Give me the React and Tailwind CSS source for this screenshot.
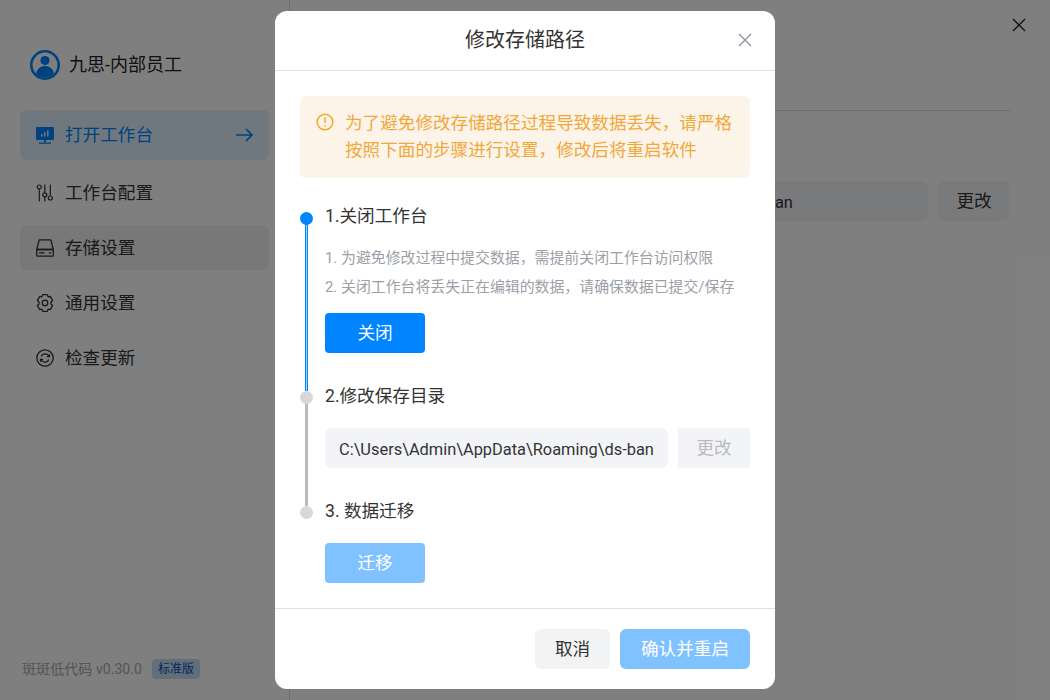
import React from "react";

function UserIcon() {
  return (
    <svg width="30" height="30" viewBox="0 0 30 30" className="shrink-0">
      <circle cx="15" cy="15" r="13.7" fill="none" stroke="#0084ff" strokeWidth="2.6" />
      <circle cx="15" cy="10.5" r="4.6" fill="#0084ff" />
      <path d="M6 23.5c1-5 4.5-7.500 9-7.500s8 2.500 9 7.500c-2.400 2.600-5.500 4-9 4s-6.600-1.400-9-4z" fill="#0084ff" />
    </svg>
  );
}

function MonitorIcon() {
  return (
    <svg width="18" height="18" viewBox="0 0 18 18" className="shrink-0">
      <rect x="0" y="1" width="18" height="13" rx="1" fill="#0084ff" />
      <rect x="8" y="14" width="2" height="2.500" fill="#0084ff" />
      <rect x="3" y="16.500" width="12" height="1.300" fill="#0084ff" />
      <path d="M5 8h1.500v2.500H5zM8 6h1.500v4.500H8zM11 4.500h1.500v6H11z" fill="#def0ff" />
    </svg>
  );
}

function SlidersIcon() {
  return (
    <svg width="18" height="18" viewBox="0 0 18 18" fill="none" stroke="#333" strokeWidth="1.200" className="shrink-0">
      <circle cx="3.300" cy="3" r="2" />
      <path d="M3.300 5v12.500M8.800 .5v8M8.800 13v4.500M14.300 .5v11" />
      <circle cx="8.800" cy="10.800" r="2" />
      <circle cx="14.300" cy="14" r="2" />
    </svg>
  );
}

function DiskIcon() {
  return (
    <svg width="18" height="18" viewBox="0 0 18 18" fill="none" stroke="#333" strokeWidth="1.300" className="shrink-0">
      <path d="M3.200 .8h11.600l2.500 9.700H.7z" strokeLinejoin="round" />
      <rect x=".7" y="10.500" width="16.600" height="6.700" rx="1" />
      <path d="M12.800 13.800h2.400M3 13.800h5.500" />
    </svg>
  );
}

function GearIcon() {
  return (
    <svg width="18" height="18" viewBox="1 .6 16 16.800" fill="none" stroke="#333" strokeWidth="1.200" className="shrink-0">
      <path d="M6.800 1.200h4.400l.7 2.100 2-.5 2.200 3.800-1.500 1.500 0 1.800 1.500 1.500-2.200 3.800-2-.5-.7 2.100H6.800l-.7-2.100-2 .5-2.200-3.800 1.500-1.500 0-1.800-1.500-1.500 2.200-3.800 2 .5z" strokeLinejoin="round" />
      <circle cx="9" cy="9" r="2.600" />
    </svg>
  );
}

function UpdateIcon() {
  return (
    <svg width="18" height="18" viewBox="0 0 18 18" fill="none" stroke="#333" strokeWidth="1.300" className="shrink-0">
      <circle cx="9" cy="9" r="8.200" />
      <path d="M13 7.200A4.300 4.300 0 0 0 5.200 7.500M5 10.800a4.300 4.300 0 0 0 7.800-.3" />
      <path d="M13.500 5.200v2.500H11M4.500 12.800v-2.500H7" />
    </svg>
  );
}

function CloseIcon({ size, color, width }) {
  return (
    <svg width={size} height={size} viewBox="0 0 14 14" fill="none" stroke={color} strokeWidth={width}>
      <path d="M1 1l12 12M13 1L1 13" />
    </svg>
  );
}

function WarnIcon() {
  return (
    <svg width="18" height="18" viewBox="0 0 18 18" fill="none" stroke="#f5a623" strokeWidth="1.500" className="shrink-0">
      <circle cx="9" cy="9" r="7.800" />
      <path d="M9 4.500v5.500M9 12v1.500" />
    </svg>
  );
}

function NavItem({ icon, label, active, selected }) {
  const bg = active ? "h-[50px] bg-[#def0ff] text-[#0084ff]" : selected ? "h-[45px] bg-[#f0f0f0] text-[#333]" : "h-[45px] text-[#333]";
  return (
    <div className={`flex items-center gap-[11px] rounded-md pl-4 pr-4 text-[17.6px] ${bg}`}>
      {icon}
      <span className={active ? "flex-1" : "flex-1 pt-[2px]"}>{label}</span>
      {active && (
        <svg width="17" height="14" viewBox="0 0 17 14" fill="none" stroke="#0084ff" strokeWidth="1.600">
          <path d="M0 7h16M10 1l6 6-6 6" />
        </svg>
      )}
    </div>
  );
}

function Step({ active, line, dotTop, titleLeading, title, children, className }) {
  return (
    <div className={`flex gap-[12px] ${className}`}>
      <div className={`flex w-[13px] shrink-0 flex-col items-center ${dotTop}`}>
        <span className={`z-10 h-[13px] w-[13px] shrink-0 rounded-full ${active ? "bg-[#0084ff]" : "bg-[#d8d8d8]"}`}></span>
        {line && <span className={`-mb-[14px] -mt-px w-[3px] flex-1 ${line}`}></span>}
      </div>
      <div className="flex-1">
        <div className={`h-[40px] text-[17.6px] text-[#333] ${titleLeading}`}>{title}</div>
        {children}
      </div>
    </div>
  );
}

export default function App() {
  return (
    <div className="relative flex h-[700px] w-[1050px] overflow-hidden bg-white" style={{ fontFamily: 'Roboto, "Noto Sans CJK SC", sans-serif' }}>
      {/* 底层页面 */}
      <aside className="flex w-[290px] shrink-0 flex-col border-r border-[#ddd] pb-[20px] pl-[20px] pr-[20px]">
        <div className="flex h-[110px] items-start gap-[9px] pl-[10px] pt-[50px] text-[18px] leading-[30px] text-[#222]">
          <UserIcon />
          <span>九思-内部员工</span>
        </div>
        <div className="flex flex-col gap-[10px]">
          <NavItem icon={<MonitorIcon />} label="打开工作台" active />
          <NavItem icon={<SlidersIcon />} label="工作台配置" />
          <NavItem icon={<DiskIcon />} label="存储设置" selected />
          <NavItem icon={<GearIcon />} label="通用设置" />
          <NavItem icon={<UpdateIcon />} label="检查更新" />
        </div>
        <div className="mt-auto flex items-center gap-[10px] pl-[2px] text-[14.1px] text-[#aaa]">
          <span>斑斑低代码 v0.30.0</span>
          <span className="rounded bg-[#c4dff5] px-[6px] text-[12px] leading-[20px] text-[#0052b0]">标准版</span>
        </div>
      </aside>
      <main className="flex-1 pr-[40px] pt-[110px]">
        <div className="h-[71px] border-t border-[#ddd]"></div>
        <div className="flex justify-end gap-[10px]">
          <div className="h-[40px] w-[464px] rounded-md bg-[#f3f4f7] pl-[14px] text-[16.4px] leading-[43px] text-[#333]">C:\Users\Admin\AppData\Roaming\ds-ban</div>
          <div className="h-[40px] w-[72px] rounded-md bg-[#f3f4f7] text-center text-[17.6px] leading-[40px] text-[#333]">更改</div>
        </div>
      </main>
      <div className="absolute right-[24px] top-[18px]">
        <CloseIcon size={14} color="#222" width={1.300} />
      </div>

      {/* 遮罩 + 弹窗 */}
      <div className="absolute inset-0 flex items-start justify-center bg-black/50 pt-[11px]">
        <div className="flex h-[678px] w-[500px] flex-col rounded-xl bg-white">
          <header className="relative flex h-[60px] shrink-0 items-center justify-center border-b border-[#dfe1ea] pb-[2px] text-[20px] text-[#333]">
            修改存储路径
            <span className="absolute right-[23px] top-[22px]">
              <CloseIcon size={14} color="#8a8f99" width={1.200} />
            </span>
          </header>
          <div className="flex-1 px-[25px] pt-[25px]">
            <div className="flex h-[82px] gap-[11px] rounded-md bg-[#fdf4e9] pl-[16px] pr-[14px] pt-[14px] text-[17.6px] leading-[27px] text-[#f0a83c]">
              <span className="pt-[3px]"><WarnIcon /></span>
              <span>为了避免修改存储路径过程导致数据丢失，请严格按照下面的步骤进行设置，修改后将重启软件</span>
            </div>
            <Step className="mt-[18px] h-[181px]" active dotTop="pt-[16px]" titleLeading="leading-[40px]" line="border-x border-[#0084ff] bg-[#a6d4ff]" title="1.关闭工作台">
              <div className="pt-[8px] text-[14.9px] leading-[28.500px] text-[#9a9fa8]">
                <p>1. 为避免修改过程中提交数据，需提前关闭工作台访问权限</p>
                <p className="whitespace-nowrap">2. 关闭工作台将丢失正在编辑的数据，请确保数据已提交/保存</p>
              </div>
              <div className="mt-[12px] h-[40px] w-[100px] rounded bg-[#0084ff] text-center text-[17.6px] leading-[40px] text-white">关闭</div>
            </Step>
            <Step className="h-[115px]" dotTop="pt-[14px]" titleLeading="leading-[38px]" line="bg-[#bbb]" title="2.修改保存目录">
              <div className="mt-[11px] flex gap-[10px]">
                <div className="h-[40px] flex-1 rounded-md bg-[#f3f4f7] pl-[14px] text-[16.4px] leading-[43px] text-[#333]">C:\Users\Admin\AppData\Roaming\ds-ban</div>
                <div className="h-[40px] w-[72px] bg-[#f3f4f7] text-center text-[17.6px] leading-[40px] text-[#bbb]">更改</div>
              </div>
            </Step>
            <Step dotTop="pt-[14px]" titleLeading="leading-[38px]" title="3. 数据迁移">
              <div className="mt-[11px] h-[40px] w-[100px] rounded bg-[#80c2ff] text-center text-[17.6px] leading-[41px] text-white">迁移</div>
            </Step>
          </div>
          <footer className="flex h-[81px] shrink-0 items-start justify-end gap-[10px] border-t border-[#dfe1ea] pr-[25px] pt-[20px]">
            <div className="h-[40px] w-[75px] rounded-md bg-[#f2f3f5] text-center text-[17.6px] leading-[41px] text-[#333]">取消</div>
            <div className="h-[40px] w-[130px] rounded-md bg-[#80c2ff] text-center text-[17.6px] leading-[41px] text-white">确认并重启</div>
          </footer>
        </div>
      </div>
    </div>
  );
}
